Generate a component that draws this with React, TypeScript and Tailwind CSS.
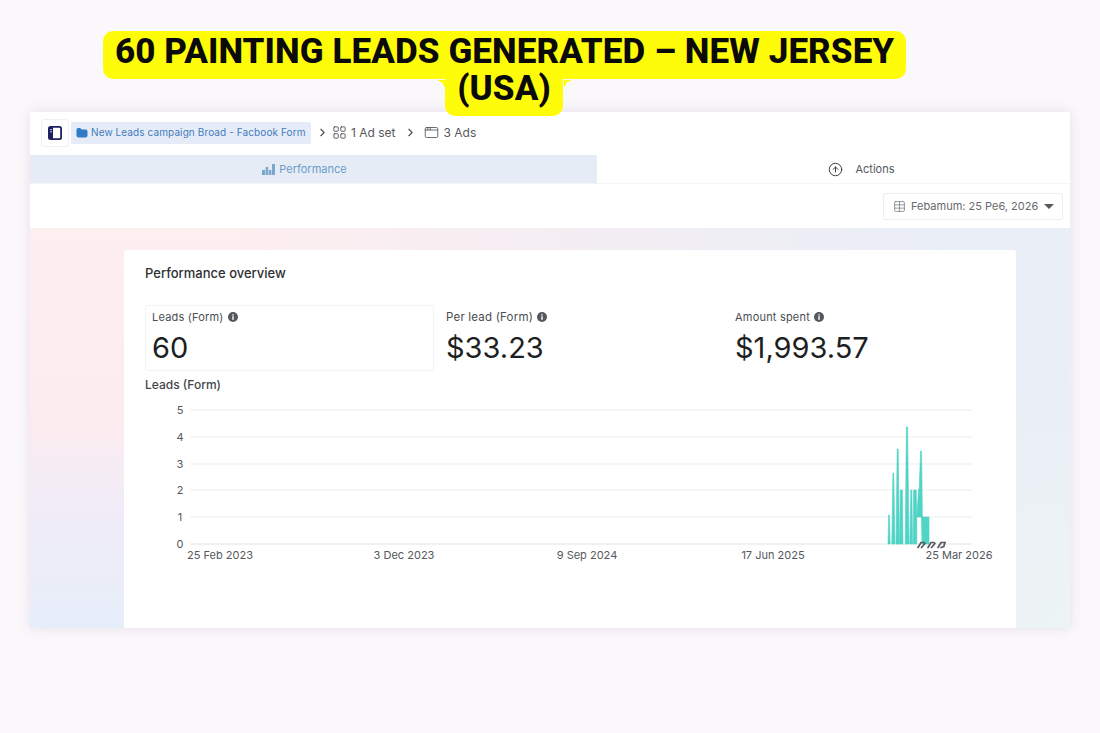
import { ChevronRight, LayoutGrid, AppWindow, CircleArrowUp, Table, Folder } from "lucide-react";

const chartPolys = [
  "888,544 888.6,515 889.4,515 890.2,544",
  "891.8,544 892.9,473 893.7,473 895,544",
  "896,544 897.2,449 898.2,449 899.4,544",
  "899.6,544 900.3,490 902.4,490 903,544",
  "905.2,544 906.4,427 907.6,427 909,544",
  "909.8,544 910.8,490 911.8,490 912.6,544",
  "913.2,544 913.6,490 916.2,490 916.8,517 918.5,490 919.2,488 920.6,451 921.6,451 922.4,517 916.8,517 916.8,544",
  "921.4,517 929,517 929,544 922,544",
];

function Info() {
  return (
    <svg width="10" height="10" viewBox="0 0 10 10" className="shrink-0">
      <circle cx="5" cy="5" r="5" fill="#55585c" />
      <rect x="4.3" y="4.2" width="1.4" height="3.6" fill="#fff" />
      <rect x="4.3" y="2.2" width="1.4" height="1.3" fill="#fff" />
    </svg>
  );
}

function Metric({ label, value, className, labelClass }: { label: string; value: string; className: string; labelClass: string }) {
  return (
    <div className={className}>
      <div className={`flex items-center leading-[14px] text-[#4a4d52] ${labelClass}`}>
        {label}
        <Info />
      </div>
      <div className="mt-[6px] text-[29px] leading-[36px] text-[#1d1f22]">{value}</div>
    </div>
  );
}

function Chart() {
  const ys = [410, 437, 464, 490, 517, 544];
  const labels = ["5", "4", "3", "2", "1", "0"];
  const xs: [string, number][] = [["25 Feb 2023", 220], ["3 Dec 2023", 404], ["9 Sep 2024", 587], ["17 Jun 2025", 773], ["25 Mar 2026", 959]];
  return (
    <svg width="892" height="190" viewBox="124 392 892 190" className="block" fontFamily="Inter, sans-serif">
      {ys.map((y, i) => (
        <g key={y}>
          <line x1="190" x2="972" y1={y} y2={y} stroke={i === 5 ? "#e3e4e8" : "#ecedf0"} strokeWidth="1" />
          <text x="180" y={y + 4} textAnchor="middle" fontSize="11" fill="#55585c">{labels[i]}</text>
        </g>
      ))}
      {chartPolys.map((p) => (
        <polygon key={p} points={p} fill="#4fd4c5" stroke="#4fd4c5" strokeWidth="0.6" />
      ))}
      <g stroke="#55575b" strokeWidth="1.7" fill="none" strokeLinecap="round">
        <path d="M918 547.5 l3 -5 h3 M921.5 547.5 l3.5 -4" />
        <path d="M928 547.5 l3 -5 h3 M931.5 547.5 l3.5 -4" />
        <path d="M938 547.5 l3 -5 h4 l-1 3 M941 547.5 l3 -1" />
      </g>
      {xs.map(([t, x]) => (
        <text key={t} x={x} y="559" textAnchor="middle" fontSize="11" fill="#55585c">{t}</text>
      ))}
    </svg>
  );
}

export default function App() {
  return (
    <div className="h-[733px] w-[1100px] overflow-hidden bg-[#fbf8fc] pt-[33px] font-['Inter',sans-serif]">
      <h1 className="relative z-10 ml-[103px] w-[802px] whitespace-nowrap text-center font-['Roboto',sans-serif] text-[35px] font-extrabold uppercase leading-[37px] tracking-[0.08px] text-[#0a0a0a]">
        <span className="rounded-[10px] bg-[#fffc0a] px-[12px] pb-[7px] pt-[0px] [box-decoration-break:clone]">
          60 Painting Leads Generated – New Jersey
          <br />
          (USA)
        </span>
        <span className="absolute left-[332px] top-[47px] h-[10px] w-[10px] bg-[radial-gradient(circle_at_0_100%,transparent_10px,#fffc0a_10px)]" />
        <span className="absolute left-[461px] top-[47px] h-[10px] w-[10px] bg-[radial-gradient(circle_at_100%_100%,transparent_10px,#fffc0a_10px)]" />
      </h1>

      <div className="mx-[30px] mt-[5px] flex h-[516px] flex-col bg-white shadow-[0_0_12px_rgba(120,110,140,0.18)]">
        <div className="flex h-[43px] items-center pb-[2px] pl-[11px] text-[12px] text-[#55585c]">
          <div className="flex h-[28px] w-[28px] items-center justify-center rounded-[3px] border border-[#f1f1f4]">
            <svg width="14" height="14" viewBox="0 0 14 14">
              <rect x="0.9" y="0.9" width="12.2" height="12.2" rx="1.6" fill="#fff" stroke="#1d2161" strokeWidth="1.8" />
              <rect x="1" y="1" width="4" height="12" fill="#1d2161" />
              <rect x="2.4" y="3" width="1.2" height="1.2" fill="#fff" />
              <rect x="2.4" y="5.2" width="1.2" height="1.2" fill="#fff" />
            </svg>
          </div>
          <div className="ml-[2px] flex h-[22px] w-[240px] items-center gap-[3px] whitespace-nowrap rounded-[2px] bg-[#e6ecf7] pl-[5px] text-[10px] tracking-[0.1px] text-[#3f7cc0]">
            <Folder size={12} fill="#2f7bc8" stroke="#2f7bc8" className="shrink-0" />
            New Leads campaign Broad - Facbook Form
          </div>
          <ChevronRight size={13} className="ml-[5px] text-[#4a4d52]" />
          <LayoutGrid size={15} strokeWidth={1.4} className="ml-[3px] text-[#4a4d52]" />
          <span className="ml-[4px]">1 Ad set</span>
          <ChevronRight size={13} className="ml-[8px] text-[#4a4d52]" />
          <AppWindow size={15} strokeWidth={1.3} className="ml-[7px] text-[#4a4d52]" />
          <span className="ml-[5px]">3 Ads</span>
        </div>

        <div className="flex h-[28px] text-[11px]">
          <div className="flex w-[567px] items-center justify-center gap-[4px] bg-[#e6ecf6] pr-[18px] text-[#6a9cc8]">
            <svg width="13" height="12" viewBox="0 0 13 12" fill="#7ba6cc">
              <rect x="0" y="7" width="3" height="5" />
              <rect x="3.6" y="4" width="2.6" height="8" />
              <rect x="6.8" y="7" width="2.6" height="5" />
              <rect x="10" y="1" width="3" height="11" />
            </svg>
            Performance
          </div>
          <div className="flex flex-1 items-center justify-center gap-[12px] pl-[56px] text-[#55585c]">
            <CircleArrowUp size={15} strokeWidth={1.5} className="text-[#333]" />
            Actions
          </div>
        </div>

        <div className="flex h-[45px] items-center justify-end border-t border-[#f5f5f7] pr-[7px]">
          <div className="flex h-[27px] w-[180px] items-center rounded-[2px] border border-[#eeeef1] pl-[9px] text-[11px] text-[#66696d]">
            <Table size={13} strokeWidth={1.4} className="text-[#77797d]" />
            <span className="ml-[5px] whitespace-nowrap">Febamum: 25 Pe6, 2026</span>
            <svg width="10" height="5" viewBox="0 0 10 5" className="ml-[6px]"><path d="M0 0h10L5 5z" fill="#55585c" /></svg>
          </div>
        </div>

        <div className="flex-1 bg-[radial-gradient(circle_at_100%_100%,#edf4f4_0%,transparent_25%),linear-gradient(to_right,transparent_0%,transparent_20%,#e9eef7_90%),linear-gradient(to_bottom,#fdeef0_0%,#fcecf0_50%,#f0ecf8_70%,#e6eef9_100%)] pl-[94px] pr-[54px] pt-[22px]">
          <div className="h-[378px] rounded-t-[3px] bg-white pt-[15px]">
            <div className="pl-[21px] text-[13px] font-medium leading-[16px] text-[#2d2f33]">Performance overview</div>
            <div className="mt-[24px] flex pl-[21px]">
              <Metric label="Leads (Form)" labelClass="gap-[4px] text-[11px] tracking-[0.2px]" value="60" className="h-[66px] w-[289px] rounded-[2px] border border-[#f3f3f6] pl-[6px] pt-[4px]" />
              <Metric label="Per lead (Form)" labelClass="gap-[4px] text-[11.5px] tracking-[0.2px]" value="$33.23" className="w-[301px] pl-[12px] pt-[5px]" />
              <Metric label="Amount spent" labelClass="gap-[4px] text-[11px] tracking-[0.2px]" value="$1,993.57" className="pt-[5px]" />
            </div>
            <div className="mt-[6px] pl-[21px] text-[12px] font-medium leading-[15px] text-[#44464a]">Leads (Form)</div>
            <Chart />
          </div>
        </div>
      </div>
    </div>
  );
}
